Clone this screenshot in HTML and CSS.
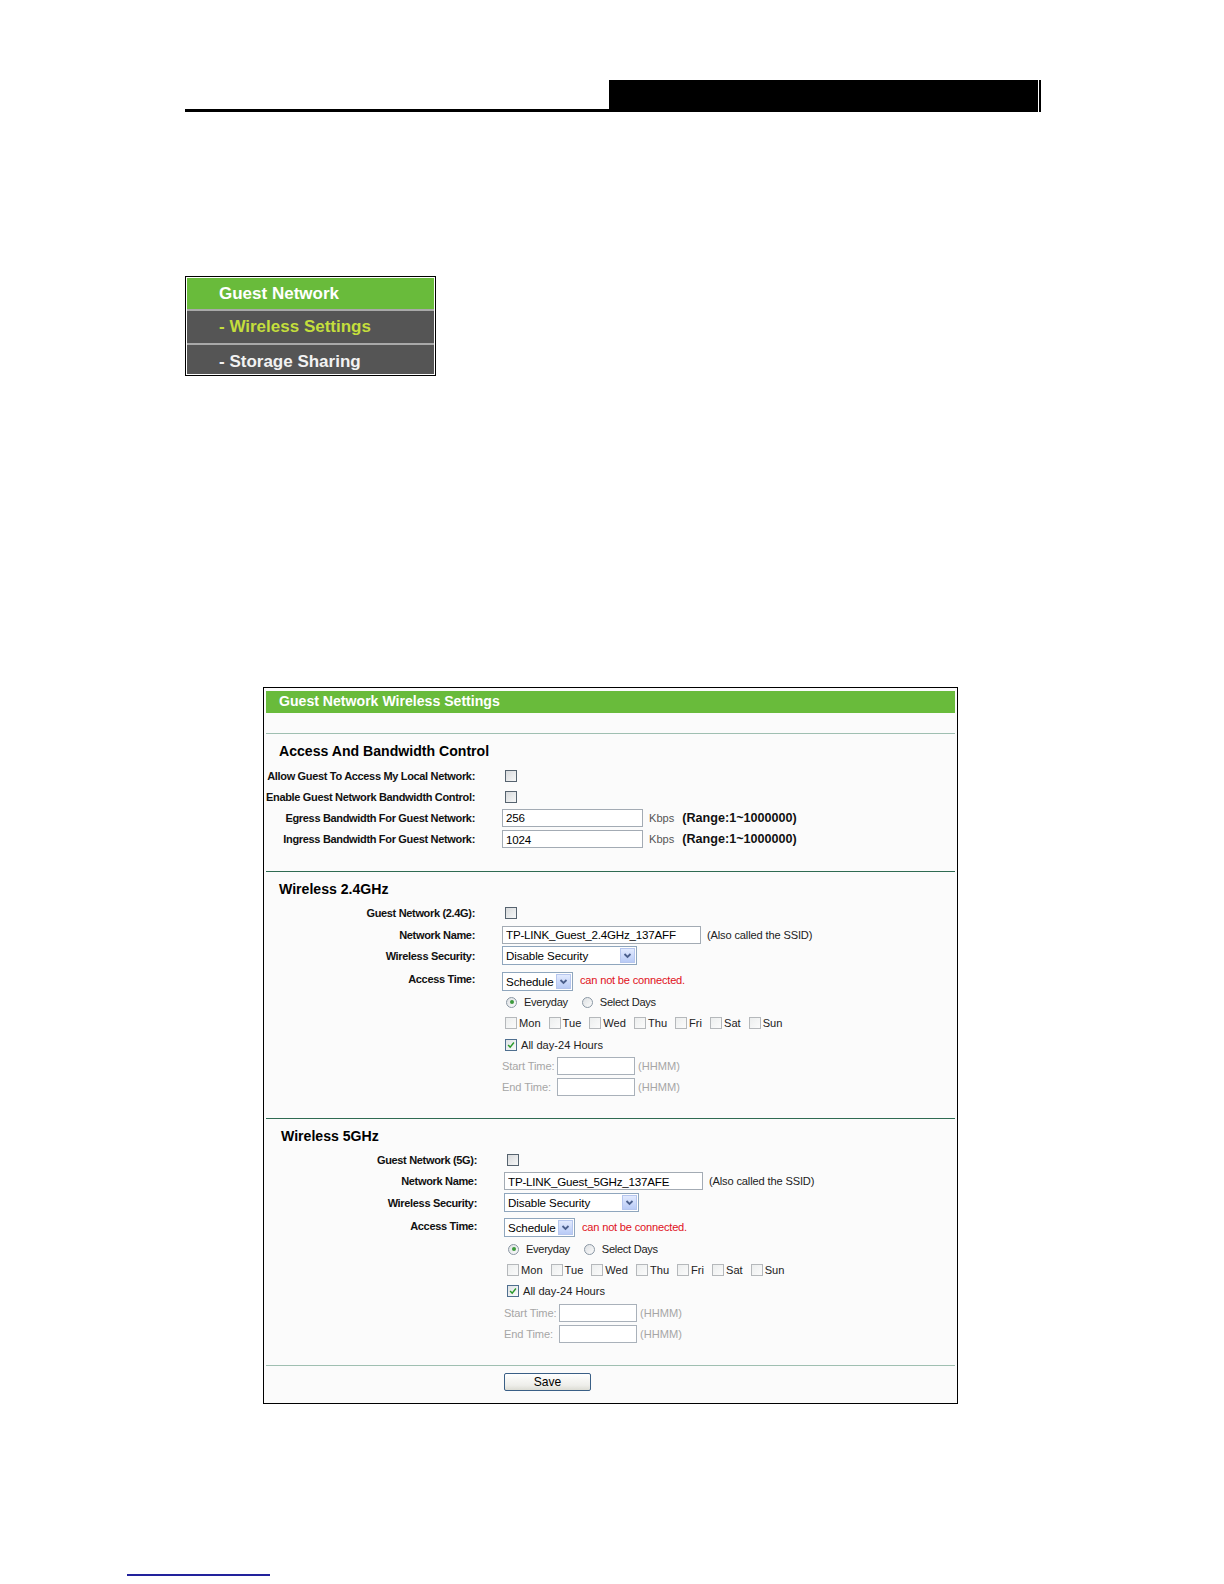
FILE: index.html
```html
<!DOCTYPE html>
<html lang="en">
<head>
<meta charset="utf-8">
<title>Guest Network Wireless Settings</title>
<link rel="stylesheet" href="styles.css">
</head>
<body>
<header class="doc-head">
  <div class="head-rule"></div>
  <div class="head-box"></div>
</header>

<nav class="menu">
  <div class="menu-item menu-top">Guest Network</div>
  <div class="menu-item menu-sub active">- Wireless Settings</div>
  <div class="menu-item menu-sub last">- Storage Sharing</div>
</nav>

<form class="panel">
  <div class="panel-title">Guest Network Wireless Settings</div>
  <div class="panel-gap"></div>

  <section class="sect sect-light">
    <h3 class="sect-title">Access And Bandwidth Control</h3>
    <div class="row"><span class="lbl">Allow Guest To Access My Local Network:</span><div class="ctl"><span class="cb"></span></div></div>
    <div class="row"><span class="lbl">Enable Guest Network Bandwidth Control:</span><div class="ctl"><span class="cb"></span></div></div>
    <div class="row"><span class="lbl">Egress Bandwidth For Guest Network:</span><div class="ctl"><input class="txt w140" type="text" value="256"><span class="unit">Kbps</span><span class="range">(Range:1~1000000)</span></div></div>
    <div class="row"><span class="lbl">Ingress Bandwidth For Guest Network:</span><div class="ctl"><input class="txt w140" type="text" value="1024"><span class="unit">Kbps</span><span class="range">(Range:1~1000000)</span></div></div>
  </section>

  <section class="sect sect-dark">
    <h3 class="sect-title">Wireless 2.4GHz</h3>
    <div class="row"><span class="lbl">Guest Network (2.4G):</span><div class="ctl"><span class="cb"></span></div></div>
    <div class="row"><span class="lbl">Network Name:</span><div class="ctl"><input class="txt ssid" type="text" value="TP-LINK_Guest_2.4GHz_137AFF"><span class="note">(Also called the SSID)</span></div></div>
    <div class="row"><span class="lbl">Wireless Security:</span><div class="ctl"><div class="select w134"><span class="sel-text">Disable Security</span><span class="sel-btn"><svg viewBox="0 0 15 15" width="15" height="15"><path d="M4.5 6 L7.5 9 L10.5 6" fill="none" stroke="#4b5f8c" stroke-width="1.8"/></svg></span></div></div></div>
    <div class="row tall"><span class="lbl">Access Time:</span><div class="ctl ctl-low"><div class="select w70"><span class="sel-text">Schedule</span><span class="sel-btn"><svg viewBox="0 0 15 15" width="15" height="15"><path d="M4.5 6 L7.5 9 L10.5 6" fill="none" stroke="#4b5f8c" stroke-width="1.8"/></svg></span></div><span class="warn">can not be connected.</span></div></div>
    <div class="row"><span class="lbl"></span><div class="ctl"><span class="rb on"></span><span class="opt">Everyday</span><span class="rb"></span><span class="opt">Select Days</span></div></div>
    <div class="row"><span class="lbl"></span><div class="ctl days"><span class="cb light"></span><span class="day">Mon</span><span class="cb light"></span><span class="day">Tue</span><span class="cb light"></span><span class="day">Wed</span><span class="cb light"></span><span class="day">Thu</span><span class="cb light"></span><span class="day">Fri</span><span class="cb light"></span><span class="day">Sat</span><span class="cb light"></span><span class="day">Sun</span></div></div>
    <div class="row"><span class="lbl"></span><div class="ctl"><span class="cb checked"><svg viewBox="0 0 12 12" width="10" height="10"><path d="M2.5 6 L5 8.5 L9.5 3" fill="none" stroke="#2a9a2a" stroke-width="1.7"/></svg></span><span class="allday">All day-24 Hours</span></div></div>
    <div class="row"><span class="lbl"></span><div class="ctl"><span class="tlabel">Start Time:</span><input class="txt w77" type="text" value=""><span class="hhmm">(HHMM)</span></div></div>
    <div class="row"><span class="lbl"></span><div class="ctl"><span class="tlabel">End Time:</span><input class="txt w77" type="text" value=""><span class="hhmm">(HHMM)</span></div></div>
  </section>

  <section class="sect sect-dark shifted">
    <h3 class="sect-title">Wireless 5GHz</h3>
    <div class="row"><span class="lbl">Guest Network (5G):</span><div class="ctl"><span class="cb"></span></div></div>
    <div class="row"><span class="lbl">Network Name:</span><div class="ctl"><input class="txt ssid" type="text" value="TP-LINK_Guest_5GHz_137AFE"><span class="note">(Also called the SSID)</span></div></div>
    <div class="row"><span class="lbl">Wireless Security:</span><div class="ctl"><div class="select w134"><span class="sel-text">Disable Security</span><span class="sel-btn"><svg viewBox="0 0 15 15" width="15" height="15"><path d="M4.5 6 L7.5 9 L10.5 6" fill="none" stroke="#4b5f8c" stroke-width="1.8"/></svg></span></div></div></div>
    <div class="row tall"><span class="lbl">Access Time:</span><div class="ctl ctl-low"><div class="select w70"><span class="sel-text">Schedule</span><span class="sel-btn"><svg viewBox="0 0 15 15" width="15" height="15"><path d="M4.5 6 L7.5 9 L10.5 6" fill="none" stroke="#4b5f8c" stroke-width="1.8"/></svg></span></div><span class="warn">can not be connected.</span></div></div>
    <div class="row"><span class="lbl"></span><div class="ctl"><span class="rb on"></span><span class="opt">Everyday</span><span class="rb"></span><span class="opt">Select Days</span></div></div>
    <div class="row"><span class="lbl"></span><div class="ctl days"><span class="cb light"></span><span class="day">Mon</span><span class="cb light"></span><span class="day">Tue</span><span class="cb light"></span><span class="day">Wed</span><span class="cb light"></span><span class="day">Thu</span><span class="cb light"></span><span class="day">Fri</span><span class="cb light"></span><span class="day">Sat</span><span class="cb light"></span><span class="day">Sun</span></div></div>
    <div class="row"><span class="lbl"></span><div class="ctl"><span class="cb checked"><svg viewBox="0 0 12 12" width="10" height="10"><path d="M2.5 6 L5 8.5 L9.5 3" fill="none" stroke="#2a9a2a" stroke-width="1.7"/></svg></span><span class="allday">All day-24 Hours</span></div></div>
    <div class="row"><span class="lbl"></span><div class="ctl"><span class="tlabel">Start Time:</span><input class="txt w77" type="text" value=""><span class="hhmm">(HHMM)</span></div></div>
    <div class="row"><span class="lbl"></span><div class="ctl"><span class="tlabel">End Time:</span><input class="txt w77" type="text" value=""><span class="hhmm">(HHMM)</span></div></div>
  </section>

  <section class="sect sect-light save-sect">
    <button class="save" type="button">Save</button>
  </section>
</form>

<div class="foot-rule"></div>
</body>
</html>
```

FILE: styles.css
```css
body {
  margin: 0;
  background: #ffffff;
  font-family: "Liberation Sans", Arial, sans-serif;
  color: #000;
}

/* document header */
.doc-head {
  display: flex;
  align-items: flex-end;
  width: 856px;
  height: 32px;
  margin: 80px 0 0 185px;
}
.head-rule {
  flex: 1;
  height: 3px;
  background: #000;
}
.head-box {
  width: 432px;
  height: 32px;
  background: #000;
  box-shadow: inset -2px 0 0 #000, inset -3px 0 0 #fff;
}

/* side menu */
.menu {
  width: 251px;
  box-sizing: border-box;
  margin: 164px 0 0 185px;
  border: 1px solid #000;
  padding: 1px;
  background: #fff;
}
.menu-item {
  height: 31px;
  box-sizing: border-box;
  padding-left: 32px;
  font-size: 17px;
  font-weight: bold;
  line-height: 31px;
  color: #fff;
}
.menu-top {
  background: #69bb3b;
}
.menu-sub {
  background: #555555;
  border-top: 2px solid #a9a9a9;
  height: 34px;
  line-height: 32px;
}
.menu-sub.active {
  color: #c4de3c;
}
.menu-sub.last {
  height: 31px;
  line-height: 31px;
  padding-top: 1px;
  color: #f2f2f2;
}

/* panel */
.panel {
  width: 695px;
  box-sizing: border-box;
  margin: 311px 0 0 263px;
  border: 1px solid #000;
  padding: 3px 2px 0 2px;
  background: #fbfbfb;
}
.panel-title {
  height: 22px;
  background: #69bb3b;
  color: #fff;
  font-size: 14.1px;
  font-weight: bold;
  line-height: 21px;
  padding-left: 13px;
}
.panel-gap {
  height: 20px;
}

.sect {
  border-top: 1px solid #9fbfb1;
  padding: 7px 0 21px 0;
}
.sect-dark {
  border-top-color: #2f6b52;
  padding-bottom: 20px;
}
.sect-dark.shifted {
  padding-left: 2px;
  padding-bottom: 20.6px;
}
.sect-title {
  margin: 0 0 4px 0;
  padding-left: 13px;
  height: 20px;
  font-size: 14.1px;
  font-weight: bold;
  line-height: 20px;
}

.row {
  display: grid;
  grid-template-columns: 209px 1fr;
  column-gap: 27px;
  height: 21.2px;
  align-items: center;
}
.row.tall {
  height: 25.3px;
}
.lbl {
  text-align: right;
  white-space: nowrap;
  font-size: 11px;
  font-weight: bold;
  letter-spacing: -0.33px;
  color: #111;
  direction: rtl;
  unicode-bidi: plaintext;
}
.ctl {
  display: flex;
  align-items: center;
  height: 100%;
  white-space: nowrap;
  font-size: 11.1px;
}
.ctl-low {
  align-items: flex-end;
  padding-bottom: 1px;
  box-sizing: border-box;
}
.ctl-low .warn {
  align-self: center;
  padding-top: 3px;
}

/* checkbox */
.cb {
  display: inline-flex;
  align-items: center;
  justify-content: center;
  width: 12px;
  height: 12px;
  box-sizing: border-box;
  margin-left: 3px;
  border: 1px solid #56636f;
  background: linear-gradient(135deg, #d8dadc, #f6f7f7);
}
.cb.light {
  border-color: #b5b8bb;
  background: linear-gradient(135deg, #eceeee, #fbfbfb);
}
.cb.checked {
  border-color: #4f6f8f;
  background: linear-gradient(135deg, #dfe3e6, #fafafa);
}

/* text inputs */
.txt {
  height: 18px;
  box-sizing: border-box;
  border: 1px solid #a3abb4;
  background: #fff;
  padding: 0 3px;
  margin: 0;
  font-family: "Liberation Sans", Arial, sans-serif;
  font-size: 11.6px;
  letter-spacing: -0.2px;
  color: #000;
  outline: none;
}
.w140 { width: 141px; }
.ssid { width: 199px; }
.w77 { width: 78px; }

.unit {
  margin-left: 6px;
  color: #555;
  font-size: 11.1px;
}
.range {
  margin-left: 8px;
  font-size: 12.6px;
  font-weight: bold;
  color: #111;
}
.note {
  margin-left: 6px;
  font-size: 11.1px;
  letter-spacing: -0.15px;
  color: #222;
}

/* select */
.select {
  display: flex;
  align-items: center;
  justify-content: space-between;
  height: 19px;
  box-sizing: border-box;
  border: 1px solid #8fa6bd;
  background: #fff;
}
.w134 { width: 135px; }
.w70 { width: 71px; }
.sel-text {
  padding-left: 3px;
  font-size: 11.6px;
  letter-spacing: -0.1px;
  color: #000;
}
.sel-btn {
  display: flex;
  width: 15px;
  height: 15px;
  margin-right: 1px;
  box-sizing: border-box;
  border: 1px solid #b6c6ee;
  background: linear-gradient(#e2eafe, #b9cbf6);
}
.sel-btn svg {
  display: block;
  margin: -1px;
}

.warn {
  margin-left: 7px;
  color: #e0101a;
  font-size: 11.1px;
  letter-spacing: -0.2px;
}

/* radios */
.rb {
  width: 11px;
  height: 11px;
  box-sizing: border-box;
  border: 1px solid #8a97a4;
  border-radius: 50%;
  background: linear-gradient(135deg, #dde0e3, #fbfbfb);
  margin-left: 4px;
  position: relative;
}
.rb.on::after {
  content: "";
  position: absolute;
  left: 2.5px;
  top: 2.5px;
  width: 4px;
  height: 4px;
  border-radius: 50%;
  background: #3c9a3c;
}
.opt {
  margin-left: 7px;
  margin-right: 10px;
  color: #222;
  letter-spacing: -0.3px;
}

/* days */
.day {
  margin-left: 2px;
  margin-right: 5px;
  color: #222;
}

.allday {
  margin-left: 4px;
  color: #222;
}

.tlabel {
  width: 55px;
  color: #a6a6a6;
  letter-spacing: -0.1px;
}
.hhmm {
  margin-left: 3px;
  color: #a6a6a6;
}
.txt.w77 {
  border-color: #a9b1ba;
}

/* save */
.save-sect {
  padding: 7px 0 12px 238px;
}
.save {
  display: block;
  width: 87px;
  height: 18px;
  margin: 0;
  padding: 0;
  border: 1px solid #3a5f86;
  border-radius: 2px;
  background: linear-gradient(#ffffff, #eeeeea 70%, #dcdcd4);
  font-family: "Liberation Sans", Arial, sans-serif;
  font-size: 12.1px;
  line-height: 16px;
  color: #000;
}

.foot-rule {
  width: 143px;
  height: 2px;
  margin: 170px 0 0 127px;
  background: #22229c;
}
```
